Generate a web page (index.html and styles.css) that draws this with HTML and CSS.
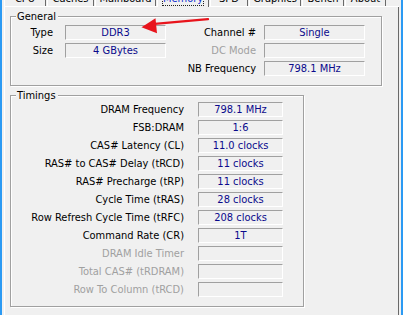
FILE: index.html
```html
<!DOCTYPE html>
<html>
<head>
<meta charset="utf-8">
<link rel="stylesheet" href="styles.css">
</head>
<body>
<div class="window">
  <div class="tabs">
    <div class="tab w-cpu">CPU</div>
    <div class="tab w-caches">Caches</div>
    <div class="tab w-main">Mainboard</div>
    <div class="tab w-mem sel"><span class="focus">Memory</span></div>
    <div class="tab w-spd">SPD</div>
    <div class="tab w-gfx">Graphics</div>
    <div class="tab w-bench">Bench</div>
    <div class="tab w-about">About</div>
  </div>
  <div class="panel">
    <div class="group general">
      <div class="legend">General</div>
      <div class="ggrid">
        <span class="lbl">Type</span><span class="val">DDR3</span><span class="lbl lbl2">Channel #</span><span class="val">Single</span>
        <span class="lbl">Size</span><span class="val">4 GBytes</span><span class="lbl lbl2 dis">DC Mode</span><span class="val"></span>
        <span></span><span></span><span class="lbl lbl2">NB Frequency</span><span class="val">798.1 MHz</span>
      </div>
    </div>
    <div class="group timings">
      <div class="legend">Timings</div>
      <div class="tgrid">
        <span class="lbl">DRAM Frequency</span><span class="val">798.1 MHz</span>
        <span class="lbl">FSB:DRAM</span><span class="val">1:6</span>
        <span class="lbl">CAS# Latency (CL)</span><span class="val">11.0 clocks</span>
        <span class="lbl">RAS# to CAS# Delay (tRCD)</span><span class="val">11 clocks</span>
        <span class="lbl">RAS# Precharge (tRP)</span><span class="val">11 clocks</span>
        <span class="lbl">Cycle Time (tRAS)</span><span class="val">28 clocks</span>
        <span class="lbl">Row Refresh Cycle Time (tRFC)</span><span class="val">208 clocks</span>
        <span class="lbl">Command Rate (CR)</span><span class="val">1T</span>
        <span class="lbl dis">DRAM Idle Timer</span><span class="val"></span>
        <span class="lbl dis">Total CAS# (tRDRAM)</span><span class="val"></span>
        <span class="lbl dis">Row To Column (tRCD)</span><span class="val"></span>
      </div>
    </div>
  </div>
  <svg class="arrow" width="403" height="315" viewBox="0 0 403 315">
    <line x1="152" y1="24.2" x2="208" y2="19.2" stroke="#e8141c" stroke-width="2.3" stroke-linecap="round"/>
    <polygon points="141.5,27.2 155.5,18.3 157,33.3" fill="#e8141c"/>
  </svg>
</div>
</body>
</html>
```
FILE: styles.css
```css
body {
  margin: 0;
  background: #f0f0f0;
  font-family: "DejaVu Sans Condensed", "DejaVu Sans", "Liberation Sans", sans-serif;
  font-stretch: condensed;
  font-size: 11px;
  color: #000;
}
.window {
  position: relative;
  width: 403px;
  height: 315px;
  box-sizing: border-box;
  border-left: 2px solid #2b9af3;
  border-right: 2px solid #2b9af3;
  overflow: hidden;
  background: #f0f0f0;
}
.tabs {
  display: flex;
  align-items: flex-start;
  height: 7px;
  margin: 0 2px;
  overflow: hidden;
  background: linear-gradient(to top, #ffffff 1px, transparent 1px);
}
.tab {
  flex: none;
  height: 14px;
  margin-top: -8px;
  margin-right: 1px;
  box-sizing: border-box;
  border-left: 1px solid #ffffff;
  border-right: 1px solid #696969;
  background: #f0f0f0;
  text-align: center;
  line-height: 14px;
  white-space: nowrap;
  overflow: hidden;
}
.tab.sel {
  height: 15px;
  color: #1030d0;
}
.focus {
  outline: 1px dotted #202020;
  outline-offset: 0;
}
.w-cpu { width: 42px; }
.w-caches { width: 47px; }
.w-main { width: 61px; }
.w-mem { width: 52px; }
.w-spd { width: 38px; }
.w-gfx { width: 52px; }
.w-bench { width: 42px; }
.w-about { width: 41px; }
.panel {
  margin: 0 2px;
  height: 308px;
  box-sizing: border-box;
  border-left: 1px solid #ffffff;
  border-right: 1px solid #696969;
  padding: 9px 0 0 5px;
}
.group {
  border: 1px solid #a0a0a0;
  box-shadow: 1px 1px 0 #ffffff, inset 1px 1px 0 #ffffff;
  box-sizing: border-box;
}
.general {
  width: 372px;
  height: 70px;
}
.timings {
  width: 294px;
  height: 212px;
  margin-top: 9px;
}
.legend {
  display: table;
  height: 15px;
  line-height: 15px;
  margin: -8px 0 0 5px;
  padding: 0 2px 0 1px;
  background: #f0f0f0;
}
.ggrid {
  display: grid;
  grid-template-columns: 54px 101px 98px 101px;
  grid-auto-rows: 15px;
  row-gap: 3px;
  margin-top: 1px;
}
.tgrid {
  display: grid;
  grid-template-columns: 173px 85px;
  column-gap: 14px;
  grid-auto-rows: 15px;
  row-gap: 3px;
  margin-top: -1px;
}
.lbl {
  text-align: right;
  padding-right: 12px;
  line-height: 15px;
  white-space: nowrap;
}
.tgrid .lbl {
  padding-right: 0;
}
.lbl2 {
  padding-right: 8px;
}
.dis {
  color: #a0a0a0;
}
.val {
  box-sizing: border-box;
  border-top: 1px solid #a0a0a0;
  border-left: 1px solid #a0a0a0;
  border-bottom: 1px solid #ffffff;
  border-right: 1px solid #ffffff;
  text-align: center;
  line-height: 13px;
  color: #0a0a8c;
  white-space: nowrap;
}
.arrow {
  position: absolute;
  left: -2px;
  top: 0;
  pointer-events: none;
}
```
